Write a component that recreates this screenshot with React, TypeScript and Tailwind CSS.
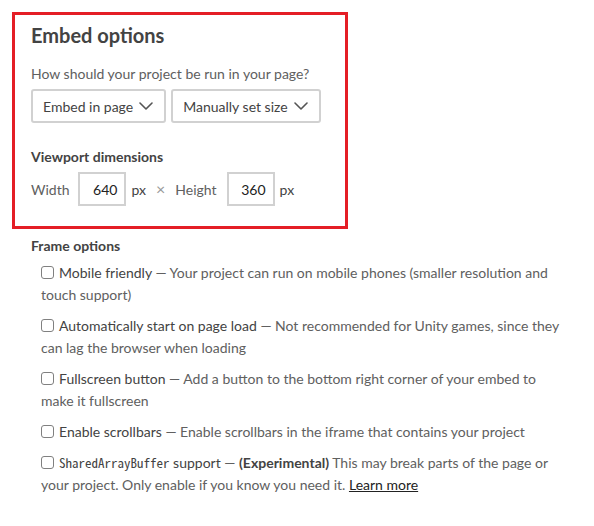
import React from "react";

const Chevron = () => (
  <svg width="14" height="8" viewBox="0 0 14 8" fill="none" className="shrink-0">
    <path d="M1 1 L7 7 L13 1" stroke="#555" strokeWidth="1.6" strokeLinecap="round" strokeLinejoin="round" />
  </svg>
);

const Select = ({ label }: { label: string }) => (
  <div className="flex items-center h-[34px] border-2 border-[#d1d1d1] rounded-[3px] pl-[10px] pr-[11px] gap-[6px] text-[14px] text-[#434343] bg-white">
    <span>{label}</span>
    <Chevron />
  </div>
);

const NumInput = ({ value }: { value: string }) => (
  <div className="w-[48px] h-[34px] border-2 border-[#d1d1d1] flex items-center justify-end pr-[7px] text-[14px] text-[#222]">
    {value}
  </div>
);

const Box = () => (
  <span className="inline-block w-[13px] h-[13px] border border-[#808080] rounded-[3px] bg-white align-middle relative top-[-2px] mr-[5px]" />
);

const Item = ({ children }: { children: React.ReactNode }) => (
  <div className="leading-[22px] text-[14px] text-[#606060] mb-[9px]">{children}</div>
);

export default function App() {
  return (
    <div
      className="w-[594px] h-[526px] bg-white pl-[12px] pt-[12px]"
      style={{ fontFamily: "Lato, 'Open Sans', sans-serif" }}
    >
      <div className="w-[336px] border-[3px] border-[#e41e26] pl-[16px] pr-[10px] pt-[8px] pb-[20px]">
        <div className="text-[20px] leading-[24px] font-bold text-[#434343]">Embed options</div>
        <div className="mt-[17px] text-[14px] leading-[20px] text-[#606060]">
          How should your project be run in your page?
        </div>
        <div className="mt-[5px] flex gap-[5px]">
          <Select label="Embed in page" />
          <Select label="Manually set size" />
        </div>
        <div className="mt-[24px] text-[14px] leading-[20px] font-bold text-[#434343]">Viewport dimensions</div>
        <div className="mt-[5px] flex items-center text-[14px] text-[#606060]">
          <span className="mr-[9px]">Width</span>
          <NumInput value="640" />
          <span className="ml-[5px] text-[#434343]">px</span>
          <span className="ml-[10px] text-[#999] text-[16px] leading-[20px]">×</span>
          <span className="ml-[10px]">Height</span>
          <span className="ml-[10px]">
            <NumInput value="360" />
          </span>
          <span className="ml-[5px] text-[#434343]">px</span>
        </div>
      </div>

      <div className="pl-[19px] mt-[7px]">
        <div className="text-[14px] leading-[20px] font-bold text-[#434343]">Frame options</div>
        <div className="mt-[6px] pl-[10px] w-[532px]">
          <Item>
            <Box />
            <span className="text-[#434343]">Mobile friendly</span> — Your project can run on mobile phones (smaller resolution and touch support)
          </Item>
          <Item>
            <Box />
            <span className="text-[#434343]">Automatically start on page load</span> — Not recommended for Unity games, since they can lag the browser when loading
          </Item>
          <Item>
            <Box />
            <span className="text-[#434343]">Fullscreen button</span> — Add a button to the bottom right corner of your embed to make it fullscreen
          </Item>
          <Item>
            <Box />
            <span className="text-[#434343]">Enable scrollbars</span> — Enable scrollbars in the iframe that contains your project
          </Item>
          <Item>
            <Box />
            <span className="text-[#434343]">
              <code
                className="text-[13px]"
                style={{ fontFamily: "'Noto Sans Mono CJK JP', 'DejaVu Sans Mono', 'Liberation Mono', monospace" }}
              >
                SharedArrayBuffer
              </code>{" "}
              support
            </span>{" "}
            — <strong className="font-bold text-[#434343]">(Experimental)</strong> This may break parts of the page or your project. Only enable if you know you need it.{" "}
            <a className="underline text-[#222]" href="#">Learn more</a>
          </Item>
        </div>
      </div>
    </div>
  );
}
